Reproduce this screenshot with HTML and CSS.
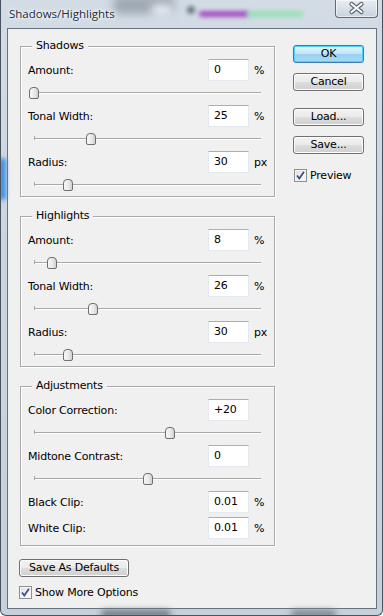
FILE: index.html
```html
<!DOCTYPE html>
<html>
<head>
<meta charset="utf-8">
<link rel="stylesheet" href="styles.css">
</head>
<body>
<div class="window">
  <span class="glow g1"></span><span class="glow g2"></span><span class="glow g3"></span><span class="glow g4"></span><span class="glow g5"></span><span class="glow g6"></span><span class="glow g7"></span><span class="glow g8"></span>
  <div class="titlebar">
    <span class="title">Shadows/Highlights</span>
    <span class="close"><svg width="43" height="18" viewBox="0 0 43 18"><path d="M16.5 5 L26.5 13 M26.5 5 L16.5 13" stroke="#55606c" stroke-width="4.2" stroke-linecap="round" fill="none"/><path d="M16.5 5 L26.5 13 M26.5 5 L16.5 13" stroke="#ffffff" stroke-width="2.2" stroke-linecap="round" fill="none"/></svg></span>
  </div>
  <div class="client">
    <div class="main">
      <div class="groups">
        <div class="group">
          <span class="legend">Shadows</span>
          <div class="row"><span class="lbl">Amount:</span><span class="field">0</span><span class="unit">%</span></div>
          <div class="slider"><div class="track"><span class="thumb" style="left:0%"></span></div></div>
          <div class="row"><span class="lbl">Tonal Width:</span><span class="field">25</span><span class="unit">%</span></div>
          <div class="slider"><div class="track"><span class="thumb" style="left:25%"></span></div></div>
          <div class="row"><span class="lbl">Radius:</span><span class="field">30</span><span class="unit">px</span></div>
          <div class="slider last"><div class="track"><span class="thumb" style="left:15%"></span></div></div>
        </div>
        <div class="group">
          <span class="legend">Highlights</span>
          <div class="row"><span class="lbl">Amount:</span><span class="field">8</span><span class="unit">%</span></div>
          <div class="slider"><div class="track"><span class="thumb" style="left:8%"></span></div></div>
          <div class="row"><span class="lbl">Tonal Width:</span><span class="field">26</span><span class="unit">%</span></div>
          <div class="slider"><div class="track"><span class="thumb" style="left:26%"></span></div></div>
          <div class="row"><span class="lbl">Radius:</span><span class="field">30</span><span class="unit">px</span></div>
          <div class="slider last"><div class="track"><span class="thumb" style="left:15%"></span></div></div>
        </div>
        <div class="group adj">
          <span class="legend">Adjustments</span>
          <div class="row"><span class="lbl">Color Correction:</span><span class="field">+20</span><span class="unit"></span></div>
          <div class="slider"><div class="track"><span class="thumb" style="left:60%"></span></div></div>
          <div class="row"><span class="lbl">Midtone Contrast:</span><span class="field">0</span><span class="unit"></span></div>
          <div class="slider"><div class="track"><span class="thumb" style="left:50%"></span></div></div>
          <div class="row"><span class="lbl">Black Clip:</span><span class="field">0.01</span><span class="unit">%</span></div>
          <div class="row clip2"><span class="lbl">White Clip:</span><span class="field">0.01</span><span class="unit">%</span></div>
        </div>
      </div>
      <div class="side">
        <span class="btn default">OK</span>
        <span class="btn cancel">Cancel</span>
        <span class="btn load">Load...</span>
        <span class="btn save">Save...</span>
        <label class="check preview"><span class="box"><svg width="11" height="11" viewBox="0 0 11 11"><path d="M2 5.5 L4.3 8.5 L9 1.8" stroke="#3b4f8a" stroke-width="1.8" fill="none"/></svg></span>Preview</label>
      </div>
    </div>
    <div class="footer">
      <span class="btn defaults">Save As Defaults</span>
      <label class="check more"><span class="box"><svg width="11" height="11" viewBox="0 0 11 11"><path d="M2 5.5 L4.3 8.5 L9 1.8" stroke="#3b4f8a" stroke-width="1.8" fill="none"/></svg></span>Show More Options</label>
    </div>
  </div>
</div>
</body>
</html>
```
FILE: styles.css
```css
* { box-sizing: border-box; }
html, body { margin: 0; padding: 0; }
body {
  width: 383px;
  height: 616px;
  overflow: hidden;
  background: #ffffff;
  font-family: "DejaVu Sans", sans-serif;
  font-size: 11px;
  letter-spacing: -0.2px;
  color: #000;
}
.window {
  position: relative;
  width: 383px;
  height: 616px;
  border: 1px solid #48525c;
  border-top: 0;
  border-radius: 0 0 6px 6px;
  background: linear-gradient(180deg, #d3dce5 0%, #cbd5df 40%, #c6d0da 100%);
  padding: 0 5px 6px 6px;
  display: flex;
  flex-direction: column;
  overflow: hidden;
}
.glow {
  position: absolute;
  filter: blur(4px);
  border-radius: 6px;
}
.g1 { left: 112px; top: -4px; width: 62px; height: 18px; background: #8e98a2; opacity: .75; }
.g2 { left: 150px; top: 5px; width: 22px; height: 10px; background: #eef3f8; }
.g3 { left: 198px; top: 11px; width: 50px; height: 6px; background: #a24fc2; filter: blur(2px); }
.g4 { left: 246px; top: 11px; width: 56px; height: 6px; background: #98dfb4; filter: blur(2px); }
.g5 { left: -2px; top: 158px; width: 7px; height: 42px; background: #3f8de6; filter: blur(2px); }
.g6 { left: 100px; top: 610px; width: 70px; height: 8px; background: #6f7983; filter: blur(3px); }
.g7 { left: 290px; top: 610px; width: 45px; height: 8px; background: #7c8690; filter: blur(3px); }
.g8 { left: 186px; top: 6px; width: 8px; height: 8px; background: #6c7680; filter: blur(2px); }
.titlebar {
  position: relative;
  height: 28px;
  flex: none;
}
.title {
  position: absolute;
  left: 2px;
  top: 6px;
  font-family: "Open Sans", sans-serif;
  font-size: 11.5px;
  letter-spacing: 0;
  color: #1d2b3a;
  text-shadow: 0 0 6px #ffffff, 0 0 3px #ffffff;
}
.close {
  position: absolute;
  right: -1px;
  top: 0;
  width: 43px;
  height: 18px;
  border: 1px solid #5f6a75;
  border-top: 0;
  border-radius: 0 0 4px 4px;
  background: linear-gradient(180deg, #e6ecf2 0%, #d8e0e8 50%, #c9d2dc 100%);
  box-shadow: inset 0 0 0 1px rgba(255,255,255,.6);
}
.close svg { display: block; margin: -1px 0 0 -1px; }
.client {
  flex: 1;
  border: 1px solid #66737f;
  background: #f0f0f0;
  padding: 17px 0 0 12px;
  display: flex;
  flex-direction: column;
}
.main {
  display: grid;
  grid-template-columns: 255px 71px;
  column-gap: 18px;
  align-items: start;
}
.groups {
  display: flex;
  flex-direction: column;
  gap: 19px;
}
.group {
  position: relative;
  border: 1px solid #a9a9a9;
  box-shadow: inset 1px 1px 0 #fff, 1px 1px 0 #fff;
  padding: 12px 0 0 7px;
}
.group.adj { padding-bottom: 6px; }
.legend {
  position: absolute;
  left: 11px;
  top: -8px;
  height: 14px;
  line-height: 14px;
  padding: 0 4px;
  background: #f0f0f0;
}
.row {
  display: flex;
  align-items: center;
  height: 22px;
}
.row.clip2 { margin-top: 4px; }
.lbl { flex: 1; }
.field {
  width: 41px;
  height: 22px;
  line-height: 20px;
  padding-left: 5px;
  background: #fff;
  border: 1px solid #e3e9ef;
  border-top-color: #abadb3;
  color: #000;
}
.unit {
  width: 25px;
  padding-left: 5px;
}
.slider {
  height: 24px;
  padding: 11px 13px 0 6px;
}
.slider.last { height: 23px; }
.track {
  position: relative;
  height: 2px;
  border-top: 1px solid #a8a8a8;
  border-bottom: 1px solid #ffffff;
}
.track::before {
  content: "";
  position: absolute;
  left: 0;
  top: -3px;
  width: 1px;
  height: 4px;
  background: #a8a8a8;
}
.thumb {
  position: absolute;
  top: -6px;
  width: 10px;
  height: 12px;
  margin-left: -5px;
  border: 1px solid #6f6f6f;
  border-radius: 4px 4px 2px 2px;
  background: linear-gradient(90deg, #f8f8f8 0%, #e8e8e8 60%, #d0d0d0 100%);
}
.side {
  display: flex;
  flex-direction: column;
  margin-top: -1px;
}
.btn {
  display: flex;
  align-items: center;
  justify-content: center;
  height: 18px;
  border: 1px solid #707070;
  border-radius: 3px;
  background: linear-gradient(180deg, #f2f2f2 0%, #ebebeb 48%, #dddddd 52%, #cfcfcf 100%);
  box-shadow: inset 0 0 0 1px #fcfcfc;
  line-height: 16px;
}
.btn.default {
  border-color: #3c7fb1;
  background: linear-gradient(180deg, #e5f4fc 0%, #c4e5f6 48%, #98d1ef 52%, #a7d9f5 100%);
  box-shadow: inset 0 0 0 1px #48d1fb, 0 0 1px #8fd0f0;
}
.btn.cancel { margin-top: 10px; }
.btn.load { margin-top: 17px; }
.btn.save { margin-top: 10px; }
.check {
  display: flex;
  align-items: center;
  gap: 3px;
}
.box {
  width: 13px;
  height: 13px;
  border: 1px solid #8e8f8f;
  background: linear-gradient(135deg, #dcdcdc 0%, #f4f4f4 60%, #ffffff 100%);
  box-shadow: inset 0 0 0 1px #f4f4f4;
  flex: none;
}
.box svg { display: block; margin: 0 0 0 0; }
.preview { margin-top: 15px; margin-left: 1px; }
.footer {
  display: flex;
  flex-direction: column;
  align-items: flex-start;
  margin-top: 13px;
  margin-left: -1px;
}
.btn.defaults { width: 110px; }
.more { margin-top: 9px; }
```
